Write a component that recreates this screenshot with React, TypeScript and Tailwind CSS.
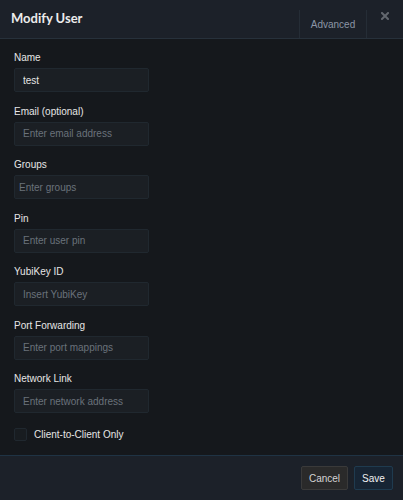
import { useState } from 'react'

const fields = [
  { label: 'Name', value: 'test', placeholder: '' },
  { label: 'Email (optional)', value: '', placeholder: 'Enter email address' },
  { label: 'Groups', value: '', placeholder: 'Enter groups', tight: true },
  { label: 'Pin', value: '', placeholder: 'Enter user pin' },
  { label: 'YubiKey ID', value: '', placeholder: 'Insert YubiKey' },
  { label: 'Port Forwarding', value: '', placeholder: 'Enter port mappings' },
  { label: 'Network Link', value: '', placeholder: 'Enter network address' },
]

const Field = ({ label, value, placeholder, tight }: { label: string; value: string; placeholder: string; tight?: boolean }) => (
  <div className="flex flex-col gap-[4px]">
    <label className="text-[10px] leading-[12px] text-[#e6e6e6]">{label}</label>
    <input
      className={`h-[24px] w-[135px] rounded-[2px] border border-[#20282f] bg-[#1b1f24] text-[10px] text-[#e6e6e6] outline-none placeholder:text-[#6a727b] ${tight ? 'px-[4px]' : 'px-[8px]'}`}
      defaultValue={value}
      placeholder={placeholder}
    />
  </div>
)

const App = () => {
  const [c2c, setC2c] = useState(false)

  return (
    <div className="flex h-[500px] w-[403px] flex-col overflow-hidden bg-[#15181c] font-['Liberation_Sans',Arial,sans-serif]">
      <div className="flex h-[39px] shrink-0 items-stretch border-b border-[#27313b] bg-[#1c2129]">
        <div className="flex flex-1 items-center pl-[11px] pb-[1px]">
          <h1 className="font-['Lato',sans-serif] text-[13px] font-bold text-[#ececec]">Modify User</h1>
        </div>
        <div className="mt-[10px] flex w-[68px] items-center justify-center border-x border-[#252d36] text-[10px] text-[#8b96a6]">
          Advanced
        </div>
        <div className="flex w-[36px] justify-center pt-[12px]">
          <svg width="8" height="8" viewBox="0 0 8 8">
            <path d="M1 1 L7 7 M7 1 L1 7" stroke="#62676e" strokeWidth="2" strokeLinecap="square" />
          </svg>
        </div>
      </div>

      <div className="flex flex-1 flex-col gap-[13.5px] px-[14px] pt-[13px]">
        {fields.map((f) => (
          <Field key={f.label} {...f} />
        ))}
        <label className="flex items-center gap-[7px]">
          <input
            type="checkbox"
            checked={c2c}
            onChange={(e) => setC2c(e.target.checked)}
            className="h-[13px] w-[13px] appearance-none rounded-[2px] border border-[#20282f] bg-[#181c20]"
          />
          <span className="text-[10px] text-[#e6e6e6]">Client-to-Client Only</span>
        </label>
      </div>

      <div className="flex h-[45px] shrink-0 items-start justify-end gap-[6px] border-t border-[#1f3344] bg-[#1c2129] pt-[10px] pr-[10px]">
        <button className="h-[24px] w-[47px] rounded-[2px] border border-[#3a3a3a] bg-[#2a2a2a] text-[10px] text-[#d4d4d4]">
          Cancel
        </button>
        <button className="h-[24px] w-[39px] rounded-[2px] border border-[#1f3b4f] bg-[#172534] text-[10px] text-[#f0f0f0]">
          Save
        </button>
      </div>
    </div>
  )
}

export default App
